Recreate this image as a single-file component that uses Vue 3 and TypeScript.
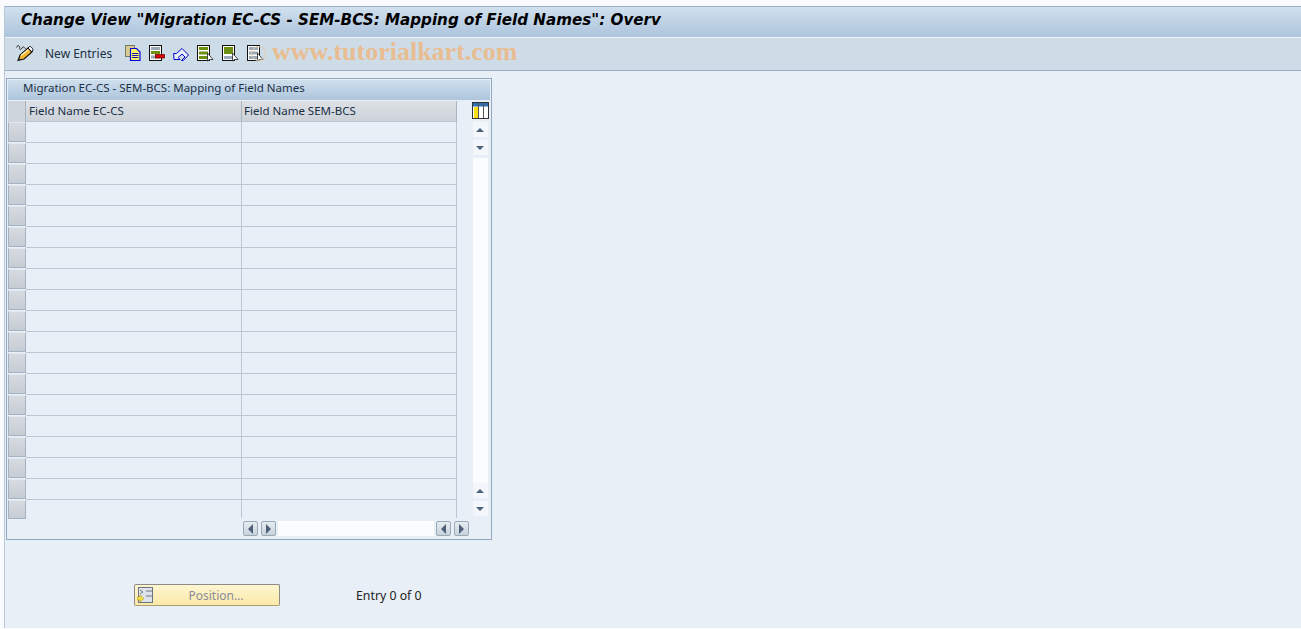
<script setup lang="ts">
const rows: number[] = Array.from({ length: 19 }, (_, i) => i)
</script>

<template>
  <div class="page">
    <div class="shell">
      <header class="title">Change View "Migration EC-CS - SEM-BCS: Mapping of Field Names": Overv</header>
      <div class="toolbar">
        <svg class="ic first" width="18" height="18" viewBox="0 0 18 18">
          <path d="M0.500 3.500c.5-2 2.500-2.500 3-1s-.5 3 1 3 1.500-3 3-2.500 1 1.500 2 1.500" fill="none" stroke="#333" stroke-width="1"/>
          <path d="M2 16.500 4 11 12 4l4 4-8 7z" fill="#f7b52e" stroke="#111" stroke-width="1.100"/>
          <path d="M5 11.500 12.500 5.500" stroke="#fff3c0" stroke-width="1.500"/>
          <path d="M12 4l1.500-1.500c1-.5 3 1.500 3.500 3L16 8z" fill="#f3f3f3" stroke="#111" stroke-width="1"/>
          <path d="M2 16.500 3 13.500 5 15.500z" fill="#333"/>
        </svg>
        <span class="new">New Entries</span>
        <svg class="ic copy" width="16" height="16" viewBox="0 0 16 16">
          <rect x="0.500" y="0.500" width="9" height="11" fill="#d9cc8e" stroke="#77776a"/>
          <path d="M5.500 3.500h6l3.500 3.500v8.500H5.500z" fill="#fff55f" stroke="#0000e0" stroke-width="1.200"/>
          <path d="M7 8.500h6.500M7 10.500h6.500M7 12.500h6.500" stroke="#0000c0" stroke-width="0.900"/>
        </svg>
        <svg class="ic del" width="16" height="16" viewBox="0 0 16 16">
          <rect x="0.500" y="0.500" width="12" height="15" fill="#fff" stroke="#111"/>
          <rect x="2" y="2" width="9" height="3" fill="#9aa8b8"/>
          <rect x="2" y="6" width="9" height="3" fill="#6d8f12"/>
          <rect x="2" y="10.500" width="9" height="3" fill="#9aa8b8"/>
          <rect x="6.500" y="9.500" width="9" height="3.500" fill="#e00000" stroke="#600" stroke-width="0.700"/>
        </svg>
        <svg class="ic undo" width="16" height="16" viewBox="0 0 16 16">
          <path d="M0.700 8.500 1 14.500h6L5.200 12.500 9 9l3 3-3.500 3.500h1.800L15.500 10 9 3.500 3.500 8.500z" fill="#e9f0fa" stroke="#0000c8" stroke-width="1"/>
        </svg>
        <svg class="ic sel" width="17" height="17" viewBox="0 0 17 17">
          <rect x="0.500" y="0.500" width="12" height="15" fill="#fff" stroke="#111"/>
          <rect x="2" y="2" width="9" height="3" fill="#6d8f12"/>
          <rect x="2" y="6.500" width="9" height="3" fill="#6d8f12"/>
          <rect x="2" y="11" width="9" height="3" fill="#6d8f12"/>
          <path d="M10.500 8v8l2-1.500 3.500 0z" fill="#fff" stroke="#222" stroke-width="0.800"/>
        </svg>
        <svg class="ic sel" width="17" height="17" viewBox="0 0 17 17">
          <rect x="0.500" y="0.500" width="12" height="15" fill="#fff" stroke="#111"/>
          <rect x="2" y="2" width="9" height="7" fill="#6d8f12"/>
          <rect x="2" y="11" width="9" height="3" fill="#9aa8b8"/>
          <path d="M10.500 8v8l2-1.500 3.500 0z" fill="#fff" stroke="#222" stroke-width="0.800"/>
        </svg>
        <svg class="ic sel" width="17" height="17" viewBox="0 0 17 17">
          <rect x="0.500" y="0.500" width="12" height="15" fill="#fff" stroke="#111"/>
          <rect x="2" y="2" width="9" height="3" fill="#9aa8b8"/>
          <rect x="2" y="6.500" width="9" height="3" fill="#9aa8b8"/>
          <rect x="2" y="11" width="9" height="3" fill="#9aa8b8"/>
          <path d="M10.500 8v8l2-1.500 3.500 0z" fill="#fff" stroke="#222" stroke-width="0.800"/>
        </svg>
        <span class="mark-circle"></span>
        <span class="watermark">www.tutorialkart.com</span>
      </div>

      <main class="content">
        <section class="panel">
          <div class="panel-title">Migration EC-CS - SEM-BCS: Mapping of Field Names</div>
          <div class="grid-wrap">
            <div class="grid">
              <div class="head">
                <div class="corner"></div>
                <div class="hcell c1">Field Name EC-CS</div>
                <div class="hcell c2">Field Name SEM-BCS</div>
              </div>
              <div v-for="r in rows" :key="r" class="row">
                <div class="sel-cell"></div>
                <div class="cell c1"></div>
                <div class="cell c2"></div>
              </div>
            </div>
            <div class="vscroll">
              <svg class="cfg" width="17" height="17" viewBox="0 0 17 17">
                <rect x="0.500" y="0.500" width="16" height="16" fill="#fff" stroke="#333"/>
                <rect x="1" y="1" width="15" height="3.500" fill="#2f6fb0"/>
                <rect x="2" y="5" width="4" height="11" fill="#f7e017"/>
                <path d="M6.500 1v15M11.500 1v15" stroke="#555"/>
              </svg>
              <div class="sbtn"><i class="arr up"></i></div>
              <div class="sbtn"><i class="arr down"></i></div>
              <div class="vtrack"></div>
              <div class="sbtn"><i class="arr up"></i></div>
              <div class="sbtn"><i class="arr down"></i></div>
            </div>
          </div>
          <div class="hscroll">
            <div class="hbtn"><i class="arr left"></i></div>
            <div class="hbtn"><i class="arr right"></i></div>
            <div class="htrack"></div>
            <div class="hbtn"><i class="arr left"></i></div>
            <div class="hbtn"><i class="arr right"></i></div>
          </div>
        </section>

        <div class="footer">
          <button class="pos" type="button">
            <svg class="pos-ic" width="16" height="16" viewBox="0 0 16 16">
              <rect x="1.500" y="0.500" width="14" height="15" fill="#dfe4ea" stroke="#6b7480"/>
              <path d="M9 4h6M9 9h6" stroke="#6b7480"/>
              <path d="M3 3l3 2-3 2" fill="none" stroke="#6b7480"/>
              <path d="M0 10h3V8l4 3.500L3 15v-2H0z" fill="#f6e04a" stroke="#b09a20" stroke-width="0.600"/>
            </svg>
            <span class="pos-label">Position...</span>
          </button>
          <span class="entry">Entry 0 of 0</span>
        </div>
      </main>
    </div>
  </div>
</template>

<style scoped>
.page {
  height: 629px;
  box-sizing: border-box;
  padding: 6px 0 1px 4px;
  background: #fafbfd;
  font-family: "Noto Sans", "DejaVu Sans", sans-serif;
  font-size: 11.500px;
  color: #222;
  overflow: hidden;
}
.shell {
  height: 100%;
  display: flex;
  flex-direction: column;
  background: #e8eff7;
  border-left: 1px solid #b9c8d8;
}
.title {
  height: 31px;
  box-sizing: border-box;
  border-top: 1px solid #98aec6;
  padding: 0 0 0 16px;
  line-height: 27px;
  background: linear-gradient(#d0e0ee, #adc4dc);
  font-family: "DejaVu Sans", sans-serif;
  font-weight: bold;
  font-style: italic;
  font-size: 15.150px;
  color: #000;
  white-space: nowrap;
}
.toolbar {
  height: 34px;
  box-sizing: border-box;
  border-top: 1px solid #eef3f8;
  border-bottom: 1px solid #98aec6;
  background: #cedce8;
  display: flex;
  align-items: center;
  position: relative;
  padding: 0 0 2px 11px;
}
.ic { display: block; flex: none; }
.new { margin-left: 11px; width: 80px; font-size: 12px; color: #1b2f45; white-space: nowrap; }
.del { margin-left: 8px; }
.undo { margin-left: 8px; }
.sel { margin-left: 8px; }
.mark-circle {
  position: absolute;
  left: 246px;
  top: 8px;
  width: 13px;
  height: 13px;
  border: 1px solid #e6c8a8;
  border-radius: 50%;
}
.watermark {
  position: absolute;
  left: 267px;
  top: 0;
  line-height: 28px;
  font-family: "Liberation Serif", serif;
  font-weight: bold;
  font-size: 26px;
  color: #e9bd92;
  white-space: nowrap;
}
.content {
  flex: 1;
  padding: 7px 0 0 1px;
}
.panel {
  width: 486px;
  height: 462px;
  box-sizing: border-box;
  border: 1px solid #8fa9c4;
  padding: 1px;
  display: flex;
  flex-direction: column;
}
.panel-title {
  height: 20px;
  line-height: 16px;
  padding-left: 15px;
  background: linear-gradient(#cfdfed, #aec5dc);
  color: #1b2f45;
  white-space: nowrap;
}
.grid-wrap { display: flex; }
.grid { width: 449px; flex: none; }
.head { display: flex; height: 21px; margin-top: 1px; }
.corner {
  width: 18px;
  flex: none;
  background: #cfd5dc;
  border-right: 1px solid #aab4c0;
  box-sizing: border-box;
}
.hcell {
  box-sizing: border-box;
  height: 21px;
  line-height: 19px;
  padding-left: 3px;
  background: linear-gradient(#dde1e6, #cdd2d9);
  border-right: 1px solid #aab4c0;
  border-bottom: 1px solid #bcc6d2;
  color: #1b2f45;
  white-space: nowrap;
}
.c1 { width: 216px; flex: none; }
.c2 { width: 215px; flex: none; }
.hcell.c2 { padding-left: 2px; }
.row { display: flex; height: 21px; }
.row:last-child { height: 19px; }
.sel-cell {
  width: 18px;
  height: 20px;
  flex: none;
  box-sizing: border-box;
  background: linear-gradient(#d6dbe1, #c6ccd3);
  border: 1px solid #a5b2c1;
  border-top-color: #e3e8ee;
}
.row:last-child .sel-cell { height: 19px; }
.cell {
  box-sizing: border-box;
  border-right: 1px solid #bcc6d2;
  border-bottom: 1px solid #bcc6d2;
}
.row:last-child .cell { border-bottom: none; height: 18px; }
.vscroll {
  flex: 1;
  display: flex;
  flex-direction: column;
  align-items: center;
  padding-left: 13px;
}
.cfg { margin-top: 2px; margin-bottom: 3px; flex: none; }
.sbtn {
  width: 15px;
  height: 15px;
  margin-bottom: 3px;
  background: #f3f6fa;
  display: flex;
  align-items: center;
  justify-content: center;
  flex: none;
}
.vtrack {
  width: 15px;
  height: 325px;
  background: #fbfcfe;
  flex: none;
}
.arr { display: block; width: 0; height: 0; border: 4px solid transparent; }
.up { border-top: 0; border-left-width: 4.500px; border-right-width: 4.500px; border-bottom: 4px solid #4c6175; }
.down { border-bottom: 0; border-left-width: 4.500px; border-right-width: 4.500px; border-top: 4px solid #4c6175; }
.left { border-left: 0; border-top-width: 5px; border-bottom-width: 5px; border-right: 5px solid #4c6175; }
.right { border-right: 0; border-top-width: 5px; border-bottom-width: 5px; border-left: 5px solid #4c6175; }
.hscroll {
  display: flex;
  align-items: center;
  height: 15px;
  padding-left: 235px;
  margin-top: 2px;
}
.hbtn {
  width: 15px;
  height: 15px;
  box-sizing: border-box;
  flex: none;
  margin-right: 3px;
  border: 1px solid #9aa9b8;
  border-radius: 2px;
  background: linear-gradient(#e6ecf2, #c9d3dd);
  display: flex;
  align-items: center;
  justify-content: center;
}
.htrack {
  width: 156px;
  height: 15px;
  margin-right: 2px;
  margin-left: -1px;
  background: #fbfcfe;
  flex: none;
}
.footer {
  display: flex;
  align-items: center;
  margin-top: 44px;
  padding-left: 128px;
  height: 22px;
}
.pos {
  width: 146px;
  height: 22px;
  box-sizing: border-box;
  padding: 0;
  border: 1px solid #8c8c84;
  border-bottom-color: #a89f70;
  border-radius: 2px;
  background: linear-gradient(#fdf6d2, #fbe9a8);
  display: flex;
  align-items: center;
  position: relative;
  font: inherit;
  font-size: 12px;
}
.pos-ic { margin-left: 2px; flex: none; }
.pos-label {
  position: absolute;
  left: 18px;
  right: 0;
  text-align: center;
  color: #8b8b9a;
}
.entry {
  margin-left: 76px;
  font-size: 12.300px;
  color: #222;
  white-space: nowrap;
}
</style>
